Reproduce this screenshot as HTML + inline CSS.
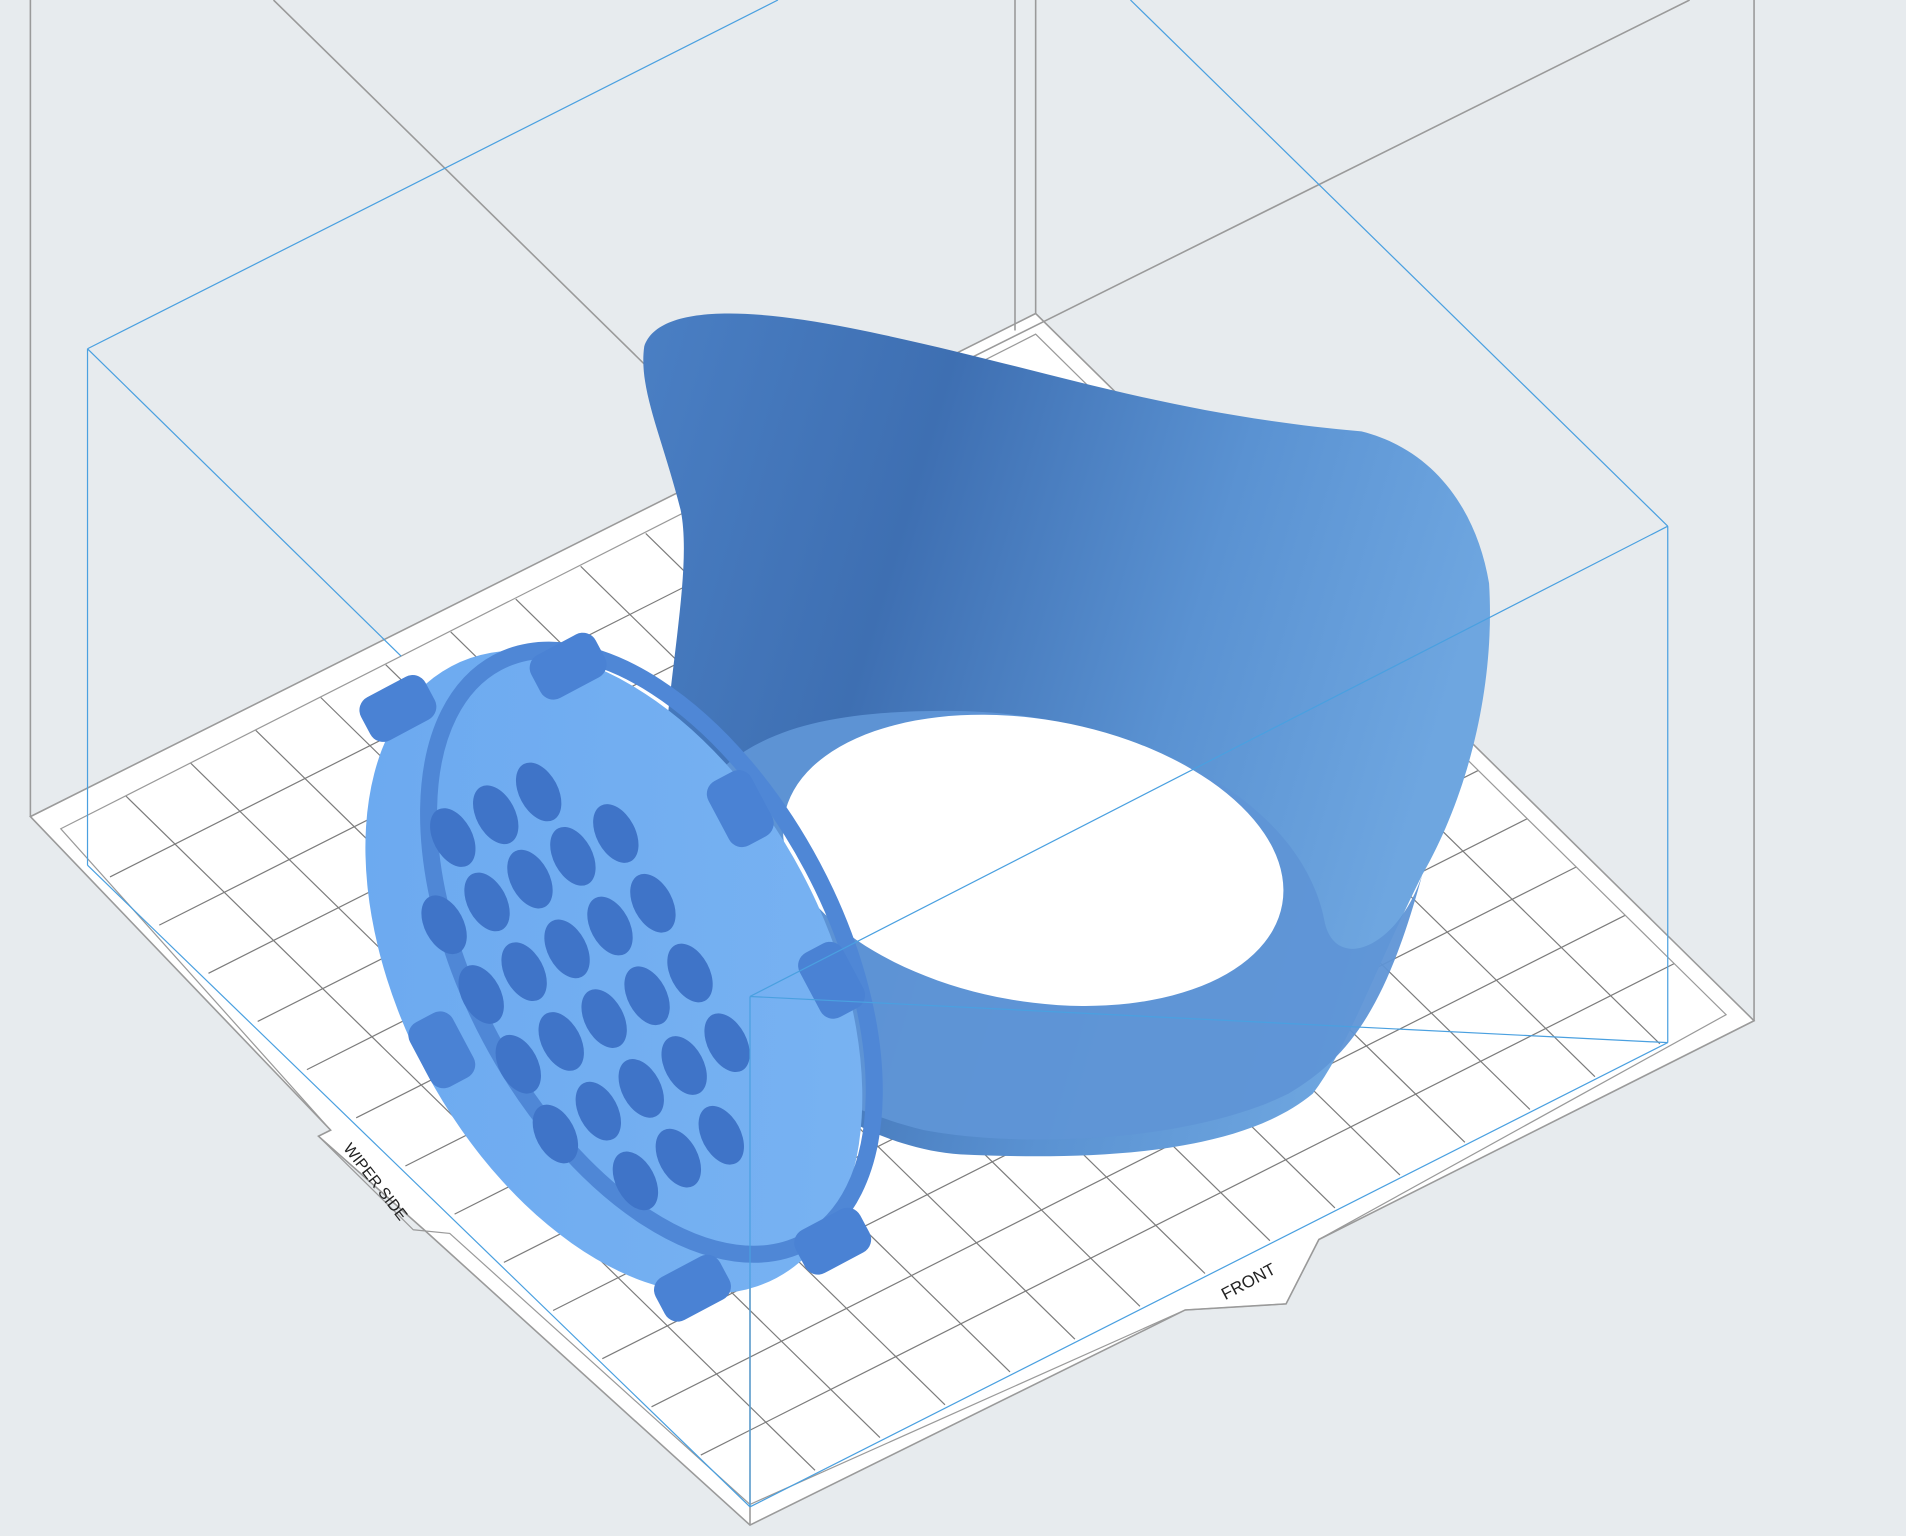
<!DOCTYPE html>
<html><head><meta charset="utf-8"><style>
html,body{margin:0;padding:0;background:#e7ebee;overflow:hidden}
svg{display:block}
</style></head><body>
<svg width="1906" height="1536" viewBox="0 0 1568 1264" preserveAspectRatio="none" xmlns="http://www.w3.org/2000/svg">
<defs>
<linearGradient id="rib" x1="0" y1="0" x2="1" y2="0.3">
<stop offset="0" stop-color="#4a7fc4"/><stop offset="0.35" stop-color="#3e6fb2"/><stop offset="0.7" stop-color="#5a92d2"/><stop offset="1" stop-color="#6ea6e0"/>
</linearGradient>
<linearGradient id="disc" x1="0" y1="0" x2="1" y2="1">
<stop offset="0" stop-color="#6aa8f0"/><stop offset="1" stop-color="#7ab4f2"/>
</linearGradient>
<clipPath id="plate"><polygon points="50,682 852,275 1420,835 1085,1020 1058,1073 975,1078 617,1238 370,1015 340,1012 262,935 272,930"/></clipPath>
</defs>
<rect width="1568" height="1264" fill="#e7ebee"/>
<polygon points="25,672 852,258 1443,840 1085,1020 1058,1073 975,1078 617,1255 350,1013 262,935 272,930" fill="#fff" stroke="#9a9a9a" stroke-width="1.3"/>
<g clip-path="url(#plate)" stroke="#7c7c7c" stroke-width="1.2" fill="none">
<g transform="matrix(802,-405,567,555,50,682)">
<path vector-effect="non-scaling-stroke" d="M0.0667,0V1M0.1333,0V1M0.2,0V1M0.2667,0V1M0.3333,0V1M0.4,0V1M0.4667,0V1M0.5333,0V1M0.6,0V1M0.6667,0V1M0.7333,0V1M0.8,0V1M0.8667,0V1M0.9333,0V1M0,0.0714H1M0,0.1429H1M0,0.2143H1M0,0.2857H1M0,0.3571H1M0,0.4286H1M0,0.5H1M0,0.5714H1M0,0.6429H1M0,0.7143H1M0,0.7857H1M0,0.8571H1M0,0.9286H1"/>
</g>
</g>
<polygon points="50,682 852,275 1420,835 1085,1020 1058,1073 975,1078 617,1238 370,1015 340,1012 262,935 272,930" fill="none" stroke="#9a9a9a" stroke-width="1"/>
<g stroke="#9a9a9a" stroke-width="1.3" fill="none">
<path d="M25,0V672M835,0V272M852,0V258M1443,0V840M617,385V1255M225,0L617,385M617,385L1390,0"/>
</g>
<text x="282" y="945" font-family="Liberation Sans,sans-serif" font-size="13" fill="#222" transform="rotate(52 282 945)">WIPER SIDE</text>
<text x="1008" y="1070" font-family="Liberation Sans,sans-serif" font-size="14" fill="#222" transform="rotate(-28 1008 1070)">FRONT</text>
<path d="M530,285 C540,255 600,250 700,270 C850,300 950,340 1120,355 C1180,370 1215,420 1225,480 C1230,560 1210,650 1170,720 C1130,800 1110,860 1080,900 C1020,950 900,955 790,950 C720,945 650,900 610,850 C570,800 540,740 545,650 C548,560 570,470 560,420 C545,360 525,320 530,285Z" fill="url(#rib)"/>
<path d="M570,660 C610,600 680,585 780,585 C920,585 1070,650 1090,760 C1100,800 1150,780 1170,720 C1140,830 1110,870 1060,900 C980,940 840,945 760,930 C680,910 620,870 595,830 Z" fill="#5f95d6" opacity="0.95"/>
<ellipse cx="850" cy="708" rx="208" ry="116" transform="rotate(10 850 708)" fill="#fff"/>
<g transform="rotate(-28 505 800)">
<ellipse cx="505" cy="800" rx="175" ry="285" fill="url(#disc)"/>
<ellipse cx="540" cy="800" rx="150" ry="270" fill="none" stroke="#4f87d6" stroke-width="14"/>
<g fill="#3f74c8">
<ellipse cx="440" cy="640" rx="16" ry="26"/><ellipse cx="480" cy="640" rx="16" ry="26"/><ellipse cx="520" cy="640" rx="16" ry="26"/>
<ellipse cx="400" cy="700" rx="16" ry="26"/><ellipse cx="440" cy="700" rx="16" ry="26"/><ellipse cx="480" cy="700" rx="16" ry="26"/><ellipse cx="520" cy="700" rx="16" ry="26"/><ellipse cx="560" cy="700" rx="16" ry="26"/>
<ellipse cx="400" cy="765" rx="16" ry="26"/><ellipse cx="440" cy="765" rx="16" ry="26"/><ellipse cx="480" cy="765" rx="16" ry="26"/><ellipse cx="520" cy="765" rx="16" ry="26"/><ellipse cx="560" cy="765" rx="16" ry="26"/>
<ellipse cx="400" cy="830" rx="16" ry="26"/><ellipse cx="440" cy="830" rx="16" ry="26"/><ellipse cx="480" cy="830" rx="16" ry="26"/><ellipse cx="520" cy="830" rx="16" ry="26"/><ellipse cx="560" cy="830" rx="16" ry="26"/>
<ellipse cx="400" cy="895" rx="16" ry="26"/><ellipse cx="440" cy="895" rx="16" ry="26"/><ellipse cx="480" cy="895" rx="16" ry="26"/><ellipse cx="520" cy="895" rx="16" ry="26"/><ellipse cx="560" cy="895" rx="16" ry="26"/>
<ellipse cx="440" cy="960" rx="16" ry="26"/><ellipse cx="480" cy="960" rx="16" ry="26"/><ellipse cx="520" cy="960" rx="16" ry="26"/>
</g>
<g fill="#4a82d4">
<rect x="420" y="505" width="60" height="40" rx="12"/><rect x="560" y="540" width="60" height="40" rx="12"/>
<rect x="640" y="700" width="40" height="60" rx="12"/><rect x="640" y="860" width="40" height="60" rx="12"/>
<rect x="330" y="760" width="40" height="60" rx="12"/><rect x="530" y="1060" width="60" height="40" rx="12"/><rect x="410" y="1040" width="60" height="40" rx="12"/>
</g>
</g>
<g stroke="#4aa0e0" stroke-width="1" fill="none">
<path d="M72,287L640,0M72,287V712M72,287L330,540M930,0L1372,433M1372,433V858M1372,433L617,820M617,820V1240M72,712L617,1240L1372,858M617,820L1372,858"/>
</g>
</svg>
</body></html>
